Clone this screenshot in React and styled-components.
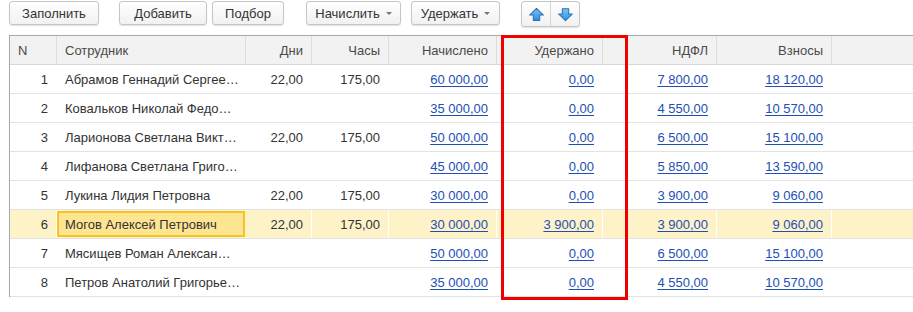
import React from 'react';
import styled, {createGlobalStyle} from 'styled-components';

const GlobalStyle = createGlobalStyle`
  html, body {
    margin: 0;
    padding: 0;
    background: #fff;
    font-family: "Liberation Sans", Arial, sans-serif;
    font-size: 13px;
    color: #333;
  }
`;

const COLS = '47px 189px 66px 77px 108px 106px 114px 115px 1fr';

// names are shown the way the grid cuts them in the reference
const rows = [
  {n: 1, name: 'Абрамов Геннадий Сергее…', days: '22,00', hours: '175,00', acc: '60 000,00', ded: '0,00', ndfl: '7 800,00', fees: '18 120,00'},
  {n: 2, name: 'Ковальков Николай Федо…', days: '', hours: '', acc: '35 000,00', ded: '0,00', ndfl: '4 550,00', fees: '10 570,00'},
  {n: 3, name: 'Ларионова Светлана Викт…', days: '22,00', hours: '175,00', acc: '50 000,00', ded: '0,00', ndfl: '6 500,00', fees: '15 100,00'},
  {n: 4, name: 'Лифанова Светлана Григо…', days: '', hours: '', acc: '45 000,00', ded: '0,00', ndfl: '5 850,00', fees: '13 590,00'},
  {n: 5, name: 'Лукина Лидия Петровна', days: '22,00', hours: '175,00', acc: '30 000,00', ded: '0,00', ndfl: '3 900,00', fees: '9 060,00'},
  {n: 6, name: 'Могов Алексей Петрович', days: '22,00', hours: '175,00', acc: '30 000,00', ded: '3 900,00', ndfl: '3 900,00', fees: '9 060,00', current: true},
  {n: 7, name: 'Мясищев Роман Алексан…', days: '', hours: '', acc: '50 000,00', ded: '0,00', ndfl: '6 500,00', fees: '15 100,00'},
  {n: 8, name: 'Петров Анатолий Григорье…', days: '', hours: '', acc: '35 000,00', ded: '0,00', ndfl: '4 550,00', fees: '10 570,00'},
];

const Page = styled.div`
  position: relative;
  padding: 1px 0 0 9px;
  height: 311px;
  overflow: hidden;
`;

const Toolbar = styled.div`
  display: flex;
  align-items: flex-start;
  height: 25px;
  margin-bottom: 9px;
`;

const Button = styled.button`
  display: flex;
  align-items: center;
  justify-content: center;
  gap: 6px;
  box-sizing: border-box;
  width: ${p => p.$w}px;
  height: 24px;
  margin-left: ${p => p.$gap || 0}px;
  padding: 0;
  border: 1px solid #c6c6c6;
  border-radius: 3px;
  background: linear-gradient(#ffffff, #f1f1f1);
  box-shadow: 0 1px 1px rgba(0, 0, 0, 0.12);
  font-family: inherit;
  font-size: 13px;
  color: #333;
`;

const Caret = styled.span`
  width: 0;
  height: 0;
  border-left: 3px solid transparent;
  border-right: 3px solid transparent;
  border-top: 3px solid #777;
  margin-top: 1px;
`;

const ArrowGroup = styled.div`
  display: flex;
  margin-left: ${p => p.$gap}px;
  height: 24px;
  border: 1px solid #c6c6c6;
  border-radius: 3px;
  background: linear-gradient(#ffffff, #f1f1f1);
  box-shadow: 0 1px 1px rgba(0, 0, 0, 0.12);
`;

const ArrowButton = styled.div`
  display: flex;
  align-items: center;
  justify-content: center;
  width: 28px;
  & + & {
    border-left: 1px solid #d4d4d4;
  }
`;

const BlockArrow = ({down}) => (
  <svg width="17" height="15" viewBox="0 0 16 14">
    <defs>
      <linearGradient id={down ? 'ad' : 'au'} x1="0" y1="0" x2="0" y2="1">
        <stop offset="0" stopColor="#7cc4f4" />
        <stop offset="1" stopColor="#2f8fdc" />
      </linearGradient>
    </defs>
    <path
      d={down
        ? 'M5 1.5 H11 V6.5 H14.5 L8 12.8 L1.5 6.5 H5 Z'
        : 'M8 1.2 L14.5 7.5 H11 V12.5 H5 V7.5 H1.5 Z'}
      fill={`url(#${down ? 'ad' : 'au'})`}
      stroke="#2a74b8"
      strokeWidth="1"
      strokeLinejoin="round"
    />
  </svg>
);

const Table = styled.div`
  border-top: 1px solid #a8a8a8;
  border-left: 1px solid #a8a8a8;
  margin-right: -20px;
`;

const Row = styled.div`
  display: grid;
  grid-template-columns: ${COLS};
  height: 29px;
  box-sizing: border-box;
  border-bottom: 1px solid ${p => (p.$head ? '#d6d6d6' : '#e3e3e3')};
  background: ${p => (p.$head ? '#f2f2f2' : p.$current ? '#fdf2c8' : '#fff')};
`;

const HeadCell = styled.div`
  display: flex;
  align-items: center;
  justify-content: ${p => (p.$left ? 'flex-start' : 'flex-end')};
  padding: 0 8px;
  border-right: 1px solid #dcdcdc;
  color: #4a4a4a;
  white-space: nowrap;
`;

const Cell = styled.div`
  display: flex;
  align-items: center;
  justify-content: ${p => (p.$left ? 'flex-start' : 'flex-end')};
  min-width: 0;
  padding: 0 8px;
  border-right: 1px solid ${p => (p.$current ? '#ffffff' : 'transparent')};
  color: #333;
  white-space: nowrap;
`;

const NameCell = styled(Cell)`
  padding-right: 2px;
  ${p => p.$current && `
    margin: 1px 1px 1px 0;
    border: 2px solid #f5c324;
    background: #fde592;
    padding-left: 6px;
  `}
`;

const Link = styled.a`
  color: #1d4fb5;
  text-decoration: underline;
  text-underline-offset: 2px;
  cursor: pointer;
`;

const Highlight = styled.div`
  position: absolute;
  left: 501px;
  top: 35px;
  width: 127px;
  height: 265px;
  box-sizing: border-box;
  border: 3px solid #f20000;
  pointer-events: none;
`;

const App = () => (
  <Page>
    <GlobalStyle />
    <Toolbar>
      <Button $w={90}>Заполнить</Button>
      <Button $w={88} $gap={20}>Добавить</Button>
      <Button $w={72} $gap={5}>Подбор</Button>
      <Button $w={95} $gap={22}>Начислить <Caret /></Button>
      <Button $w={89} $gap={10}>Удержать <Caret /></Button>
      <ArrowGroup $gap={21}>
        <ArrowButton><BlockArrow /></ArrowButton>
        <ArrowButton><BlockArrow down /></ArrowButton>
      </ArrowGroup>
    </Toolbar>
    <Table>
      <Row $head>
        <HeadCell $left>N</HeadCell>
        <HeadCell $left>Сотрудник</HeadCell>
        <HeadCell>Дни</HeadCell>
        <HeadCell>Часы</HeadCell>
        <HeadCell>Начислено</HeadCell>
        <HeadCell>Удержано</HeadCell>
        <HeadCell>НДФЛ</HeadCell>
        <HeadCell>Взносы</HeadCell>
        <HeadCell />
      </Row>
      {rows.map(r => (
        <Row key={r.n} $current={r.current}>
          <Cell $current={r.current}>{r.n}</Cell>
          <NameCell $left $current={r.current}>{r.name}</NameCell>
          <Cell $current={r.current}>{r.days}</Cell>
          <Cell $current={r.current}>{r.hours}</Cell>
          <Cell $current={r.current}><Link>{r.acc}</Link></Cell>
          <Cell $current={r.current}><Link>{r.ded}</Link></Cell>
          <Cell $current={r.current}><Link>{r.ndfl}</Link></Cell>
          <Cell $current={r.current}><Link>{r.fees}</Link></Cell>
          <Cell />
        </Row>
      ))}
    </Table>
    <Highlight />
  </Page>
);

export default App;
